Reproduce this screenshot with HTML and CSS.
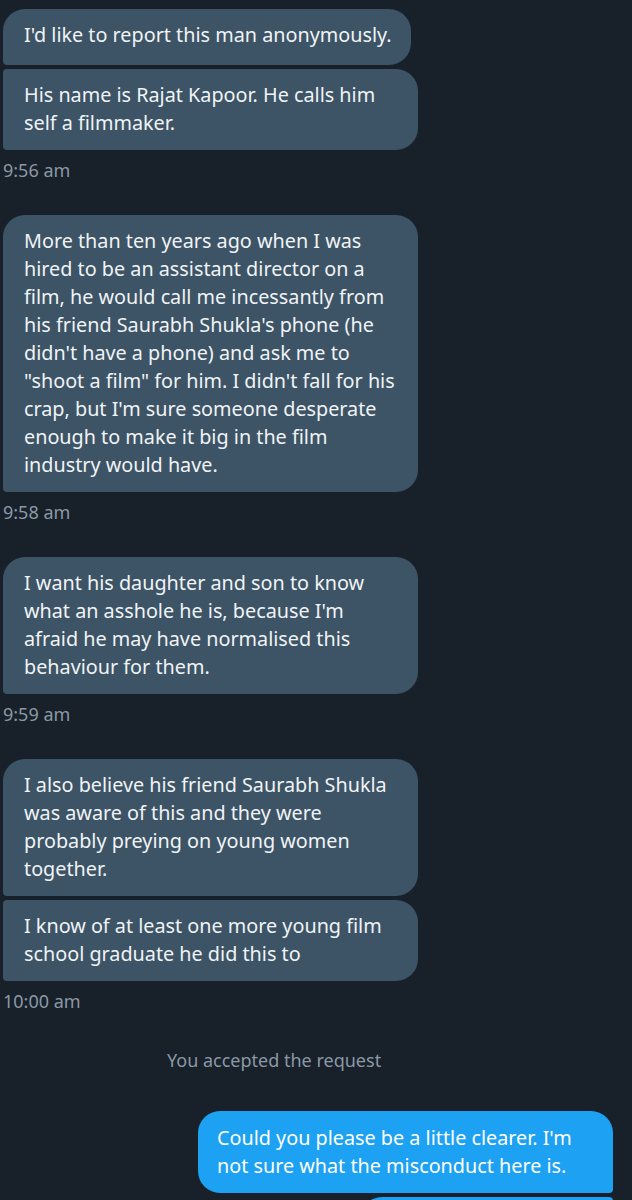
FILE: index.html
```html
<!DOCTYPE html>
<html lang="en">
<head>
  <meta charset="UTF-8" />
  <meta name="viewport" content="width=device-width, initial-scale=1.0"/>
  <title>Messages</title>
  <link rel="stylesheet" href="styles.css">
</head>
<body>
  <div class="chat">

    <!-- Received messages -->
    <div class="group">
      <div class="bubble">I'd like to report this man anonymously.</div>
      <div class="bubble">His name is Rajat Kapoor. He calls him self a filmmaker.</div>
      <p class="time">9:56 am</p>
    </div>

    <div class="group">
      <div class="bubble">More than ten years ago when I was hired to be an assistant director on a film, he would call me incessantly from his friend Saurabh Shukla's phone (he didn't have a phone) and ask me to "shoot a film" for him. I didn't fall for his crap, but I'm sure someone desperate enough to make it big in the film industry would have.</div>
      <p class="time">9:58 am</p>
    </div>

    <div class="group">
      <div class="bubble">I want his daughter and son to know what an asshole he is, because I'm afraid he may have normalised this behaviour for them.</div>
      <p class="time">9:59 am</p>
    </div>

    <div class="group">
      <div class="bubble">I also believe his friend Saurabh Shukla was aware of this and they were probably preying on young women together.</div>
      <div class="bubble">I know of at least one more young film school graduate he did this to</div>
      <p class="time">10:00 am</p>
    </div>

    <p class="notice">You accepted the request</p>

    <!-- Sent messages -->
    <div class="group sent">
      <div class="bubble">Could you please be a little clearer. I'm not sure what the misconduct here is.</div>
      <div class="bubble next"></div>
    </div>

  </div>
</body>
</html>
```

FILE: styles.css
```css
* { box-sizing: border-box; margin: 0; padding: 0; }

body {
  background: #18202a;
  font-family: 'Noto Sans', 'Open Sans', sans-serif;
  color: #f0f3f5;
}

.chat {
  height: 100vh;
  overflow: hidden;
  padding: 9px 19px 0 3px;
}

.group {
  display: flex;
  flex-direction: column;
  align-items: flex-start;
  gap: 4px;
  margin-bottom: 31px;
}

.bubble {
  max-width: 415px;
  min-height: 56px;
  padding: 12px 19px 13px 21px;
  background: #3d5466;
  border-radius: 22px;
  font-size: 19.8px;
  line-height: 28px;
}

.group .bubble:not(:first-child) { border-top-left-radius: 4px; }
.group .bubble { border-bottom-left-radius: 4px; }

.time {
  margin-top: 2px;
  font-size: 18px;
  line-height: 28px;
  color: #8b98a5;
}

.notice {
  margin: 6px 0 37px 164px;
  font-size: 18px;
  line-height: 28px;
  color: #8b98a5;
}

.sent { align-items: flex-end; }

.sent .bubble {
  background: #1da1f2;
  color: #fff;
  padding: 13px 20px 13px 19px;
  border-radius: 22px;
  border-bottom-right-radius: 4px;
}

.sent .bubble:not(:first-child) {
  border-top-right-radius: 4px;
  border-top-left-radius: 22px;
}

.sent .next {
  width: 253px;
  height: 56px;
}
```
